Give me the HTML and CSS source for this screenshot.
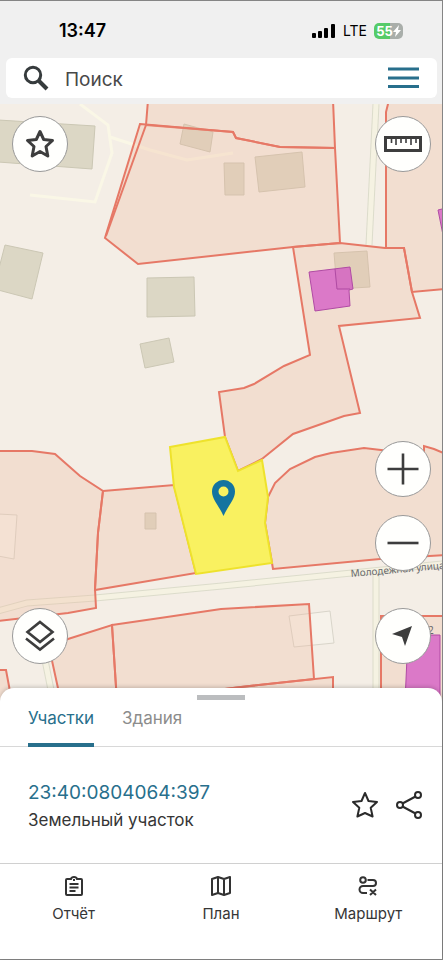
FILE: index.html
```html
<!DOCTYPE html>
<html lang="ru">
<head>
	<meta charset="UTF-8">
	<meta name="viewport" content="width=device-width, initial-scale=1">
	<title>Карта участков</title>
	<link rel="stylesheet" href="styles.css">
</head>
<body>
<div class="app">
	<header class="top">
		<div class="status">
			<span class="time">13:47</span>
			<div class="status-right">
				<svg class="signal" width="24" height="14" viewBox="0 0 24 14">
					<rect x="0" y="9" width="4" height="5" rx="1"/>
					<rect x="6" y="7" width="4" height="7" rx="1"/>
					<rect x="12" y="4" width="4" height="10" rx="1"/>
					<rect x="19" y="0" width="4" height="14" rx="1"/>
				</svg>
				<span class="net">LTE</span>
				<div class="battery">
					<span>55</span>
					<svg width="8" height="12" viewBox="0 0 8 12"><path d="M6 0L0 7h3L2 12l6-7H5z" fill="#fff"/></svg>
				</div>
			</div>
		</div>
		<form class="search">
			<label for="q">
				<svg width="26" height="26" viewBox="0 0 26 26" fill="none" stroke="#363b3d">
					<circle cx="10" cy="10" r="7.7" stroke-width="3"/>
					<path d="M16 16l8 8" stroke-width="4"/>
				</svg>
			</label>
			<input id="q" type="text" placeholder="Поиск">
			<button type="button" class="menu" aria-label="Меню">
				<svg width="32" height="22" viewBox="0 0 32 22" stroke="#286f8c" stroke-width="3"><path d="M0 2h31M0 11h31M0 19.5h31"/></svg>
			</button>
		</form>
	</header>

	<main class="map">
		<svg class="canvas" viewBox="0 104 442 596" preserveAspectRatio="xMidYMid slice">
			<rect class="land" x="0" y="104" width="442" height="596"/>
			<!-- дороги и тропинки -->
			<g class="path">
				<path d="M80 104L108 125L112 153L95 202L30 195"/>
				<path d="M110 137L150 150L187 160L233 153"/>
			</g>
			<g class="road-edge">
				<path d="M376 104L369 245"/>
				<path d="M-2 611L27 603L95 598L222 586L443 564"/>
				<path d="M376 572V700"/>
				<path d="M45 660L53 700"/>
			</g>
			<g class="road">
				<path d="M376 104L369 245"/>
				<path d="M-2 611L27 603L95 598L222 586L443 564"/>
				<path d="M376 568V700"/>
				<path d="M45 660L53 700"/>
			</g>
			<!-- здания -->
			<g class="house">
				<path d="M-2 120L95 126L92 169L-2 162z"/>
				<path d="M5 245L43 253L32 299L-2 290V272z"/>
				<path d="M147 278L194 277L195 316L147 317z"/>
				<path d="M140 344L169 338L174 362L145 368z"/>
				<path d="M184 124L213 132L210 152L180 144z"/>
				<path d="M224 163H244V195H225z"/>
				<path d="M255 157L302 152L305 187L259 192z"/>
				<path d="M334 253L367 251L370 287L337 289z"/>
				<path d="M145 513H156V529H145z"/>
			</g>
			<g class="outline">
				<path d="M-2 514L17 515L14 559L-2 556z"/>
				<path d="M289 616L330 611L334 643L294 647z"/>
			</g>
			<!-- участки -->
			<g class="parcel">
				<path d="M148 100L146 125L221 131L233 132L236 138L280 147L335 148L333 100z"/>
				<path d="M140 124L221 131L233 132L236 138L280 147L335 148L340 243L293 247L138 264L105 238z"/>
				<path d="M293 247L340 243L385 248H404L412 292L420 318L339 326L360 413L344 416L293 434L262 459L238 471L225 437L219 392L244 388L254 384L284 366L310 355z"/>
				<path d="M389 100L386 112V248H404L412 292L446 289V100z"/>
				<path d="M-3 451H32L55 454L80 476L103 491L98 533L95 589L96 608L68 613L-3 621z"/>
				<path d="M103 491L174 485L196 573L95 590L98 533z"/>
				<path d="M273 569L271 557L265 523L268 497L275 483L290 469L315 457L331 453L364 448L381 450L424 455V446L434 449L446 454V555L380 559z"/>
				<path d="M48 646L68 639L112 625L117 702H61L51 656z"/>
				<path d="M112 625L167 617L221 609L309 604L314 679L241 687L117 702z"/>
				<path d="M202 692L241 687L333 677V702H202z"/>
				<path d="M-3 670H6L12 702H-3z"/>
				<path d="M381 616H446V702H381z"/>
			</g>
			<path class="edge" d="M146 125L106 236"/>
			<g class="purple">
				<path d="M309 272L350 267L353 289L349 290L350 306L315 311z"/>
				<path d="M438 210L446 208V236L443 235z"/>
				<path d="M408 635H440V702H405z"/>
			</g>
			<path class="purple-edge" d="M335 269L337 289H350"/>
			<path class="chosen" d="M170 447L225 437L238 471L262 460L268 497L265 523L272 563L196 574L174 487z"/>
			<text class="street" transform="translate(351 577) rotate(-5)">Молодежная улица</text>
			<text class="street" x="428" y="634">2</text>
			<path class="pin" fill-rule="evenodd" d="M223.500 516C220 507 212 500 212 491.500A11.500 11.500 0 0 1 235 491.500C235 500 227 507 223.500 516zM223.500 486.500a5 5 0 1 0 0 10a5 5 0 1 0 0-10z"/>
		</svg>

		<div class="controls">
			<div class="side">
				<button type="button" class="round" aria-label="Избранное">
					<svg width="32" height="32" viewBox="0 0 32 32" fill="none" stroke="#3d3d3d" stroke-width="3" stroke-linejoin="round"><path d="M16 3.500L19.700 11.500L28.500 12.500L22 18.500L23.800 28L16 23.500L8.200 28L10 18.500L3.500 12.500L12.300 11.500z"/></svg>
				</button>
				<button type="button" class="round" aria-label="Слои">
					<svg width="32" height="32" viewBox="0 0 32 32" fill="none" stroke="#3d3d3d" stroke-width="2.600"><path d="M16 2L28.500 12L16 22L3.500 12z"/><path d="M2 18.500L16 29.500L30 18.500"/></svg>
				</button>
			</div>
			<div class="side">
				<button type="button" class="round" aria-label="Линейка">
					<svg width="38" height="16" viewBox="0 0 38 16" fill="none" stroke="#3d3d3d"><rect x="1.500" y="1.500" width="35" height="13" stroke-width="3"/><path d="M7.500 3v4M12 3v6M17 3v4M22 3v4M27 3v6M32 3v4" stroke-width="1.600"/></svg>
				</button>
				<div class="stack">
					<div class="zoom">
						<button type="button" class="round" aria-label="Приблизить">
							<svg width="32" height="32" viewBox="0 0 32 32" stroke="#3d3d3d" stroke-width="2.600"><path d="M0.500 16h31M16 0.500v31"/></svg>
						</button>
						<button type="button" class="round" aria-label="Отдалить">
							<svg width="32" height="32" viewBox="0 0 32 32" stroke="#3d3d3d" stroke-width="2.600"><path d="M0.500 16h31"/></svg>
						</button>
					</div>
					<button type="button" class="round" aria-label="Моё местоположение">
						<svg width="24" height="24" viewBox="0 0 24 24"><path d="M21 2L14 22L11 13L1 10z" fill="#3d3d3d"/></svg>
					</button>
				</div>
			</div>
		</div>
	</main>

	<section class="sheet">
		<div class="handle"></div>
		<div class="tabs" role="tablist">
			<button type="button" class="tab on" role="tab" aria-selected="true">Участки</button>
			<button type="button" class="tab" role="tab" aria-selected="false">Здания</button>
		</div>
		<div class="item">
			<div class="info">
				<a class="number" href="#">23:40:0804064:397</a>
				<div class="kind">Земельный участок</div>
			</div>
			<button type="button" class="icon" aria-label="В избранное">
				<svg width="28" height="28" viewBox="0 0 28 28" fill="none" stroke="#2b2b2b" stroke-width="2" stroke-linejoin="round"><path d="M14 2L17.500 10L26 11L19.700 16.800L21.600 25.500L14 22L6.400 25.500L8.300 16.800L2 11L10.500 10z"/></svg>
			</button>
			<button type="button" class="icon" aria-label="Поделиться">
				<svg width="28" height="28" viewBox="0 0 28 28" fill="none" stroke="#2b2b2b" stroke-width="2"><circle cx="5" cy="14" r="3"/><circle cx="23" cy="4" r="3"/><circle cx="23" cy="24" r="3"/><path d="M7.500 12.500L20.500 5.500M7.500 15.500L20.500 22.500"/></svg>
			</button>
		</div>
		<nav class="bottom">
			<a href="#">
				<svg width="20" height="20" viewBox="0 0 20 20" fill="none" stroke="#333" stroke-width="2"><path d="M7 3H3Q2 3 2 4V18Q2 19 3 19H17Q18 19 18 18V4Q18 3 17 3H13Q12.500 1 10 1T7 3z"/><path d="M5.500 8h9M5.500 11.500h9M5.500 15h6M10 3v2" /></svg>
				<span>Отчёт</span>
			</a>
			<a href="#">
				<svg width="20" height="20" viewBox="0 0 20 20" fill="none" stroke="#333" stroke-width="2" stroke-linejoin="round"><path d="M1 3L7 1L13 3L19 1V17L13 19L7 17L1 19zM7 1V17M13 3V19"/></svg>
				<span>План</span>
			</a>
			<a href="#">
				<svg width="20" height="20" viewBox="0 0 20 20" fill="none" stroke="#333" stroke-width="2"><circle cx="5" cy="4" r="2.800"/><path d="M9.500 4H15a3 3 0 0 1 0 6H5a3.500 3.500 0 0 0 0 7H9M12 13.500L18 19M18 13.500L12 19"/></svg>
				<span>Маршрут</span>
			</a>
		</nav>
	</section>
</div>
</body>
</html>
```
FILE: styles.css
```css
*{margin: 0;padding: 0;box-sizing: border-box;}
body{font-family: Inter, "Liberation Sans", sans-serif;color: #363636;background: #f0f0f0;}
button{border: 0;background: none;font: inherit;color: inherit;cursor: pointer;}
a{color: inherit;text-decoration: none;}
svg{display: block;}
.app{display: flex;flex-direction: column;min-height: 100vh;border: solid #858585;border-width: 1px 1px 1px 0;}

/* верхняя панель */
.top{padding: 0 5px 6px 6px;}
.status{display: flex;justify-content: space-between;align-items: center;height: 57px;padding: 2px 34px 0 53px;color: #000;}
.time{font-size: 18px;font-weight: 600;}
.status-right{display: flex;align-items: center;gap: 7px;}
.net{font-size: 14px;}
.battery{display: flex;align-items: center;justify-content: center;width: 29px;height: 16px;border-radius: 5px;background: linear-gradient(to right, #55cb68 55%, #a9aeaa 55%);color: #fff;font-size: 13px;font-weight: 700;line-height: 16px;}
.search{display: flex;align-items: center;height: 40px;padding: 0 17px;border-radius: 6px;background: #fff;}
.search input{flex: 1;min-width: 0;margin-left: 16px;padding-top: 2px;border: 0;outline: 0;background: none;font: inherit;font-size: 19px;}
.search input::placeholder{color: #484848;opacity: 1;}

/* карта */
.map{position: relative;flex: 1;min-height: 400px;overflow: hidden;}
.canvas{position: absolute;top: 0;left: 0;width: 100%;height: 100%;}
.land{fill: #f4eee6;}
.path{fill: none;stroke: #faf7e6;stroke-width: 3;}
.road-edge{fill: none;stroke: #dcdccb;stroke-width: 7;}
.road{fill: none;stroke: #f5f2e2;stroke-width: 5;}
.house{fill: #dcd7c5;stroke: #cbc7b4;stroke-width: 1;}
.outline{fill: #f6f2ea;stroke: #d9d5ca;stroke-width: 1;}
.parcel{fill: #efba9f;fill-opacity: .3;stroke: #e67866;stroke-width: 2;}
.edge{fill: none;stroke: #e67866;stroke-width: 2;}
.purple{fill: #d14fc4;fill-opacity: .7;stroke: #b04ba4;stroke-width: 1;}
.purple-edge{fill: none;stroke: #b04ba4;stroke-width: 1;}
.chosen{fill: #f9f160;stroke: #eee22c;stroke-width: 2;}
.street{font-family: "Noto Sans", sans-serif;font-size: 10px;fill: #68686b;}
.pin{fill: #1474a0;}
.controls{position: absolute;top: 0;right: 0;bottom: 0;left: 0;display: flex;justify-content: space-between;padding: 12px 11px 36px 12px;}
.side{display: flex;flex-direction: column;justify-content: space-between;}
.stack{display: flex;flex-direction: column;gap: 37px;}
.zoom{display: flex;flex-direction: column;gap: 18px;}
.round{display: flex;align-items: center;justify-content: center;width: 56px;height: 56px;border: 1px solid #999;border-radius: 50%;background: #fffffd;}

/* нижняя карточка */
.sheet{position: relative;margin-top: -12px;padding-top: 7px;border-radius: 14px 14px 0 0;background: #fff;box-shadow: 0 -1px 4px rgba(0,0,0,.2);}
.handle{width: 48px;height: 5px;margin: 0 auto;background: #bbbdbf;}
.tabs{display: flex;gap: 28px;height: 47px;padding: 0 28px;border-bottom: 1px solid #d8d8d8;}
.tab{height: 47px;padding-bottom: 8px;border-bottom: 4px solid transparent;font-size: 17px;color: #8c8c8c;}
.tab.on{border-color: #286f8c;color: #286f8c;}
.item{display: flex;align-items: center;gap: 16px;height: 116px;padding: 0 19px 0 28px;}
.info{flex: 1;padding-top: 2px;}
.number{display: block;font-size: 19px;line-height: 28px;color: #286f8c;}
.kind{font-size: 17px;line-height: 26px;}
.bottom{display: grid;grid-template-columns: repeat(3, 1fr);height: 96px;padding-top: 12px;border-top: 1px solid #d0d0d0;}
.bottom a{display: flex;flex-direction: column;align-items: center;gap: 8px;font-size: 15px;line-height: 20px;}
```
